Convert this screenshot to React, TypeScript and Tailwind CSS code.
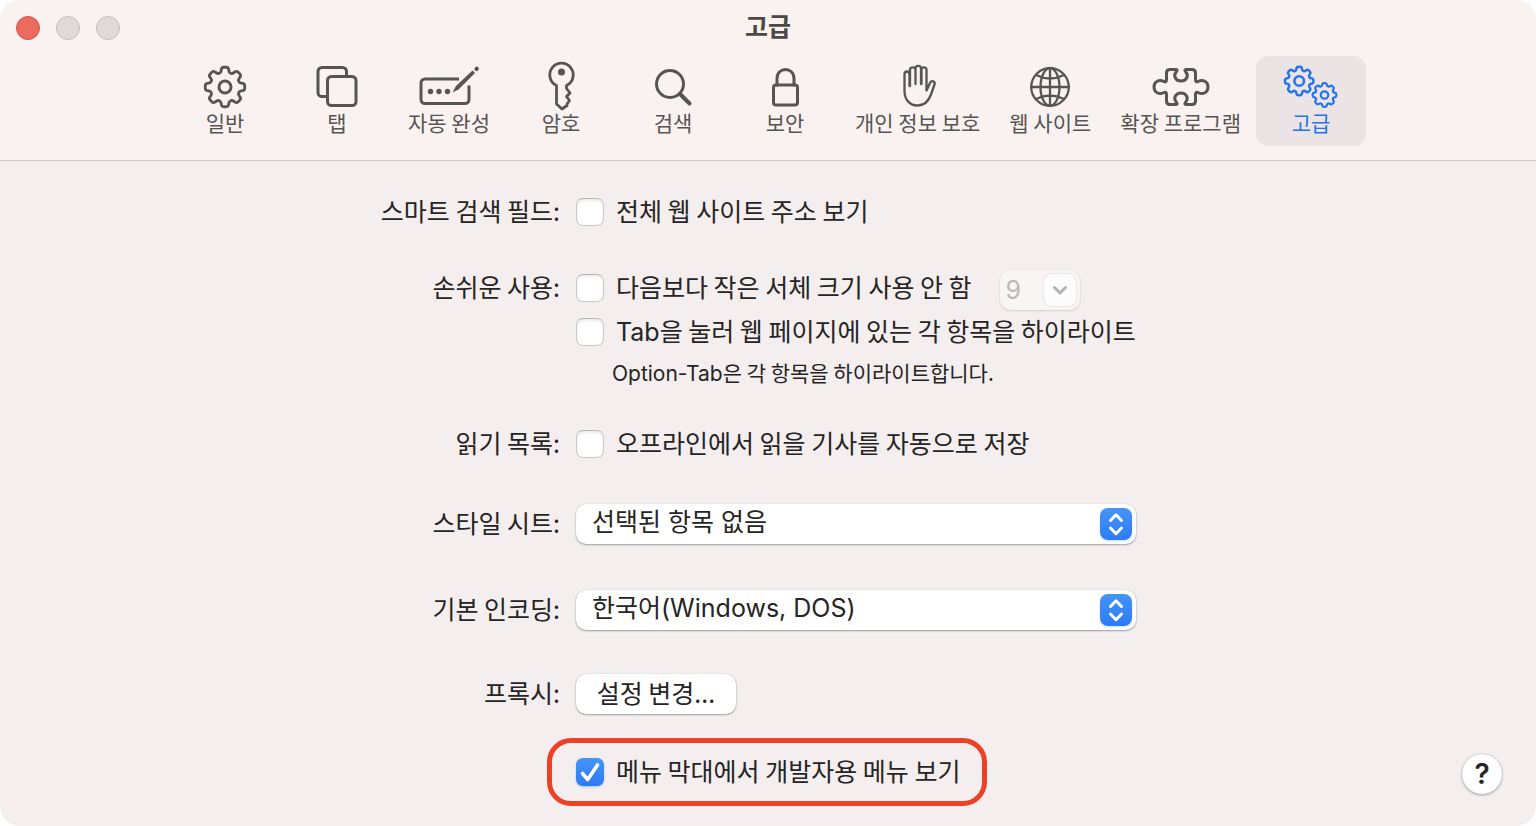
import { ReactNode, useState } from 'react';

type Point = [number, number];

// Closed outline through the points, with each corner rounded off
const roundedOutline = (points: Point[], amount: number) => {
  const mix = (a: Point, b: Point): Point => [
    a[0] + (b[0] - a[0]) * amount,
    a[1] + (b[1] - a[1]) * amount,
  ];
  const format = (p: Point) => `${p[0].toFixed(2)} ${p[1].toFixed(2)}`;

  return (
    points
      .map((point, i) => {
        const before = points[(i + points.length - 1) % points.length];
        const after = points[(i + 1) % points.length];
        return `${i === 0 ? 'M' : 'L'}${format(mix(point, before))}Q${format(point)} ${format(mix(point, after))}`;
      })
      .join('') + 'Z'
  );
};

const gearOutline = (cx: number, cy: number, outer: number, inner: number, teeth: number) => {
  const step = (Math.PI * 2) / teeth;
  const points: Point[] = [];
  for (let i = 0; i < teeth; i++) {
    const middle = i * step - Math.PI / 2;
    const corners: Point[] = [
      [-0.36 * step, inner],
      [-0.21 * step, outer],
      [0.21 * step, outer],
      [0.36 * step, inner],
    ];
    corners.forEach(([angle, radius]) => {
      points.push([cx + Math.cos(middle + angle) * radius, cy + Math.sin(middle + angle) * radius]);
    });
  }
  return roundedOutline(points, 0.35);
};

function Icon({ children }: { children: ReactNode }) {
  return (
    <svg
      width={60}
      height={52}
      viewBox="0 0 60 52"
      fill="none"
      stroke="currentColor"
      strokeWidth={3}
      strokeLinecap="round"
      strokeLinejoin="round"
      aria-hidden="true"
    >
      {children}
    </svg>
  );
}

const GeneralIcon = () => (
  <Icon>
    <path d={gearOutline(30, 27, 20, 15, 8)} strokeWidth={2.8} />
    <circle cx="30" cy="27" r="6" />
  </Icon>
);

const TabsIcon = () => (
  <Icon>
    <path d="M19.500 36.500H15a4 4 0 0 1-4-4v-21a4 4 0 0 1 4-4h20.500a4 4 0 0 1 4 4V16" strokeLinecap="butt" />
    <rect x="20.500" y="16.500" width="28.500" height="29" rx="4" />
  </Icon>
);

const AutoFillIcon = () => (
  <Icon>
    <path d="M40 19H6a4 4 0 0 0-4 4v16.500a4 4 0 0 0 4 4h40a4 4 0 0 0 4-4V25.500" strokeLinecap="butt" />
    <path d="M33.500 32.500l3.500-6.500L53.500 10.500l2.500 2.500L39.500 29.500z" fill="currentColor" stroke="none" />
    <path d="M57.500 9l.3-.3" strokeWidth={4} />
    <g fill="currentColor" stroke="none">
      <circle cx="11.500" cy="31.500" r="2.700" />
      <circle cx="20" cy="31.500" r="2.700" />
      <circle cx="28.500" cy="31.500" r="2.700" />
    </g>
  </Icon>
);

const PasswordsIcon = () => (
  <Icon>
    <path
      d="M25.500 25.500a11.700 11.700 0 1 1 10 0v3l3.500 4.500-3.500 3.500 3 4-2.500 3.500v1.500L31 49l-5.500-5z"
      strokeWidth={2.8}
    />
    <circle cx="30.500" cy="12" r="3.500" fill="currentColor" stroke="none" />
  </Icon>
);

const SearchIcon = () => (
  <Icon>
    <circle cx="27" cy="24" r="13.500" />
    <path d="M37 34l9.500 9.500" strokeWidth={4} />
  </Icon>
);

const SecurityIcon = () => (
  <Icon>
    <rect x="18.500" y="25" width="24" height="20" rx="2.500" />
    <path d="M22 25v-6.500c0-12 17-12 17 0V25" />
  </Icon>
);

const PrivacyIcon = () => (
  <Icon>
    <path
      d="M21.500 26V14.500c0-4-5-4-5 0V31c0 9 5.500 14.500 13 14.500 7 0 11-4 13.500-11l3.500-10c1-3.500-3-4.500-4.500-1.500l-3.500 7.500V10c0-3.500-5-3.500-5 0v14M27.500 24V8.500c0-3.500 5.500-3.500 5.500 0V24M27.500 24V10c0-3.500-5.500-3.500-5.500 0v16"
      strokeWidth={2.3}
    />
  </Icon>
);

const WebsitesIcon = () => (
  <Icon>
    <g strokeWidth={2.3}>
      <circle cx="30" cy="27" r="18.800" />
      <ellipse cx="30" cy="27" rx="9.500" ry="18.800" />
      <path d="M30 8v38M11 27h38M16 15q14 7 28 0M16 39q14-7 28 0" />
    </g>
  </Icon>
);

const ExtensionsIcon = () => (
  <Icon>
    <path d="M25 9.500h-6q-3.500 0-3.500 3.500v6.500q0 3-2.500 2c-5-2.500-10 0-10 5.500s5 8 10 5.500q2.500-1 2.500 2V41q0 3.500 3.500 3.500h6q2 0 .5-2c-4-4.500-.5-9.500 4.500-9.500s8.500 5 4.500 9.500q-1.500 2 .5 2h6q3.500 0 3.500-3.500v-6.500q0-3 2.500-2c5 2.500 10 0 10-5.500s-5-8-10-5.500q-2.500 1-2.500-2V13q0-3.500-3.500-3.500h-6q-2 0-.5 2c4 4.500.5 9.500-4.500 9.500s-8.500-5-4.500-9.500q1.500-2-.5-2z" />
  </Icon>
);

const AdvancedIcon = () => (
  <Icon>
    <path d={gearOutline(18.2, 21, 14.4, 11, 8)} strokeWidth={2.5} />
    <circle cx="18.200" cy="21" r="4.800" strokeWidth={2.6} />
    <path d={gearOutline(43.5, 35, 12, 9.3, 8)} strokeWidth={2.2} />
    <circle cx="43.500" cy="35" r="3.700" strokeWidth={2.2} />
  </Icon>
);

const tabs = [
  { label: '일반', icon: GeneralIcon },
  { label: '탭', icon: TabsIcon },
  { label: '자동 완성', icon: AutoFillIcon },
  { label: '암호', icon: PasswordsIcon },
  { label: '검색', icon: SearchIcon },
  { label: '보안', icon: SecurityIcon },
  { label: '개인 정보 보호', icon: PrivacyIcon },
  { label: '웹 사이트', icon: WebsitesIcon },
  { label: '확장 프로그램', icon: ExtensionsIcon },
  { label: '고급', icon: AdvancedIcon },
];

interface CheckboxProps {
  id: string;
  defaultChecked?: boolean;
  children: ReactNode;
}

function Checkbox({ id, defaultChecked, children }: CheckboxProps) {
  return (
    <div className="flex h-10 items-center gap-3">
      <span className="relative flex size-7">
        <input
          type="checkbox"
          id={id}
          defaultChecked={defaultChecked}
          className="peer size-7 appearance-none rounded-[7px] border border-[#cdc9c9] border-t-[#b9b5b5] bg-white shadow-[inset_0_2px_3px_#00000014] checked:border-0 checked:bg-linear-to-b checked:from-[#4594f8] checked:to-[#2b7bf6] checked:shadow-[0_1px_2px_#2b7bf660]"
        />
        <svg
          viewBox="0 0 28 28"
          className="pointer-events-none absolute inset-0 hidden size-7 peer-checked:block"
          fill="none"
          stroke="#fff"
          strokeWidth={3.6}
          strokeLinecap="round"
          strokeLinejoin="round"
          aria-hidden="true"
        >
          <path d="M6.500 15.500l5.200 6L21.500 7" />
        </svg>
      </span>
      <label htmlFor={id} className="whitespace-nowrap pb-1 leading-9">
        {children}
      </label>
    </div>
  );
}

interface PopupProps {
  id: string;
  options: string[];
}

function Popup({ id, options }: PopupProps) {
  return (
    <div className="relative w-[560px]">
      <select
        id={id}
        className="block h-10 w-full appearance-none rounded-[10px] bg-white pb-1 pl-4 pr-12 font-['Inter','Noto_Sans_CJK_KR',sans-serif] text-[25px] leading-9 shadow-[0_0_1px_#00000040,0_1px_2px_#00000050]"
      >
        {options.map((option) => (
          <option key={option}>{option}</option>
        ))}
      </select>
      <span className="pointer-events-none absolute right-1 top-1 flex size-8 items-center justify-center rounded-[8px] bg-linear-to-b from-[#4594f8] to-[#2b7bf6] shadow-[0_1px_2px_#2b7bf640]">
        <svg
          width="32"
          height="32"
          viewBox="0 0 32 32"
          fill="none"
          stroke="#fff"
          strokeWidth={3}
          strokeLinecap="round"
          strokeLinejoin="round"
          aria-hidden="true"
        >
          <path d="M10.500 12.500L16 6.800l5.500 5.700M10.500 20l5.500 5.700L21.500 20" />
        </svg>
      </span>
    </div>
  );
}

interface RowProps {
  label: string;
  htmlFor: string;
  className?: string;
  children: ReactNode;
}

function Row({ label, htmlFor, className, children }: RowProps) {
  return (
    <div className={`grid grid-cols-[3fr_5fr] ${className ?? ''}`}>
      <label htmlFor={htmlFor} className="whitespace-nowrap pb-1 pr-4 text-right leading-9">
        {label}
      </label>
      <div>{children}</div>
    </div>
  );
}

export default function App() {
  const [activeTab, setActiveTab] = useState('고급');

  return (
    <div className="min-h-screen bg-white font-['Noto_Sans_CJK_KR',sans-serif] text-[25px] leading-10 text-[#262424]">
      <div className="flex min-h-screen flex-col overflow-hidden rounded-[20px] bg-[#f4eeee]">
        <header className="border-b border-[#cfc8c8] bg-[#faf1f1] pb-[14px]">
          {/* Title bar */}
          <div className="grid h-14 grid-cols-[1fr_auto_1fr] items-center px-4">
            <div className="flex gap-4">
              <button type="button" aria-label="닫기" className="size-6 rounded-full border border-[#d9524a] bg-[#ed6a5f]" />
              <button type="button" aria-label="최소화" disabled className="size-6 rounded-full border border-[#c4bcbc] bg-[#e1d9d9]" />
              <button type="button" aria-label="확대" disabled className="size-6 rounded-full border border-[#c4bcbc] bg-[#e1d9d9]" />
            </div>
            <h1 className="pb-1.5 font-bold text-[#4b4846]">{activeTab}</h1>
          </div>

          {/* Toolbar */}
          <nav className="flex justify-center gap-0.5">
            {tabs.map(({ label, icon: TabIcon }) => (
              <button
                key={label}
                type="button"
                onClick={() => setActiveTab(label)}
                className={`flex h-[90px] min-w-[110px] flex-col items-center whitespace-nowrap rounded-xl px-[13px] pt-1 text-[21px] leading-5 ${
                  activeTab === label ? 'bg-[#ece4e4] text-[#2475f0]' : 'text-[#575553]'
                }`}
              >
                <TabIcon />
                {label}
              </button>
            ))}
          </nav>
        </header>

        <main className="flex flex-col pt-[31px]">
          <Row label="스마트 검색 필드:" htmlFor="full-address">
            <Checkbox id="full-address">전체 웹 사이트 주소 보기</Checkbox>
          </Row>

          <Row label="손쉬운 사용:" htmlFor="min-font" className="mt-9">
            <div className="flex items-start gap-7">
              <Checkbox id="min-font">다음보다 작은 서체 크기 사용 안 함</Checkbox>
              <div className="mt-0.5 flex h-10 w-20 items-center rounded-[10px] bg-[#f8f6f5] pl-1.5 pr-1 shadow-[0_0_1px_#00000020,0_1px_2px_#00000020]">
                <input
                  type="text"
                  aria-label="서체 크기"
                  defaultValue="9"
                  disabled
                  className="w-0 flex-1 bg-transparent font-['Inter',sans-serif] text-[25px] leading-8 text-[#bbb8b7]"
                />
                <button
                  type="button"
                  aria-label="서체 크기 선택"
                  disabled
                  className="flex size-8 items-center justify-center rounded-[8px] bg-[#fdfcfc] shadow-[0_0_2px_#00000030]"
                >
                  <svg
                    width="16"
                    height="12"
                    viewBox="0 0 16 12"
                    fill="none"
                    stroke="#b5b1b0"
                    strokeWidth={3}
                    strokeLinecap="round"
                    strokeLinejoin="round"
                    aria-hidden="true"
                  >
                    <path d="M2.500 3.500L8 9l5.500-5.500" />
                  </svg>
                </button>
              </div>
            </div>
            <div className="mt-0.5">
              <Checkbox id="tab-highlight">
                <span className="font-['Inter',sans-serif] leading-none">Tab</span>을 눌러 웹 페이지에 있는 각 항목을
                하이라이트
              </Checkbox>
            </div>
            <p className="pl-9 text-[21px]">
              <span className="font-['Inter',sans-serif] leading-none">Option-Tab</span>은 각 항목을 하이라이트합니다.
            </p>
          </Row>

          <Row label="읽기 목록:" htmlFor="offline" className="mt-8">
            <Checkbox id="offline">오프라인에서 읽을 기사를 자동으로 저장</Checkbox>
          </Row>

          <Row label="스타일 시트:" htmlFor="style-sheet" className="mt-10">
            <Popup id="style-sheet" options={['선택된 항목 없음', '기타…']} />
          </Row>

          <Row label="기본 인코딩:" htmlFor="encoding" className="mt-[46px]">
            <Popup id="encoding" options={['한국어(Windows, DOS)', '유니코드(UTF-8)']} />
          </Row>

          <Row label="프록시:" htmlFor="proxy" className="mt-11">
            <button
              type="button"
              id="proxy"
              className="block h-10 w-40 rounded-[10px] bg-white pb-1 leading-9 shadow-[0_0_1px_#00000040,0_1px_2px_#00000050]"
            >
              설정 변경...
            </button>
          </Row>

          <div className="mt-6 grid grid-cols-[3fr_5fr]">
            <div className="col-start-2 -ml-[29px] flex items-center justify-between pr-[34px]">
              <div className="rounded-[24px] border-5 border-[#ec4127] py-[9px] pl-6 pr-[22px]">
                <Checkbox id="develop-menu" defaultChecked>
                  메뉴 막대에서 개발자용 메뉴 보기
                </Checkbox>
              </div>
              <button
                type="button"
                aria-label="도움말"
                className="mt-1 flex size-10 items-center justify-center rounded-full bg-white font-['Inter',sans-serif] text-[28px] font-semibold shadow-[0_0_1px_#00000040,0_1px_3px_#00000050]"
              >
                ?
              </button>
            </div>
          </div>
        </main>
      </div>
    </div>
  );
}
